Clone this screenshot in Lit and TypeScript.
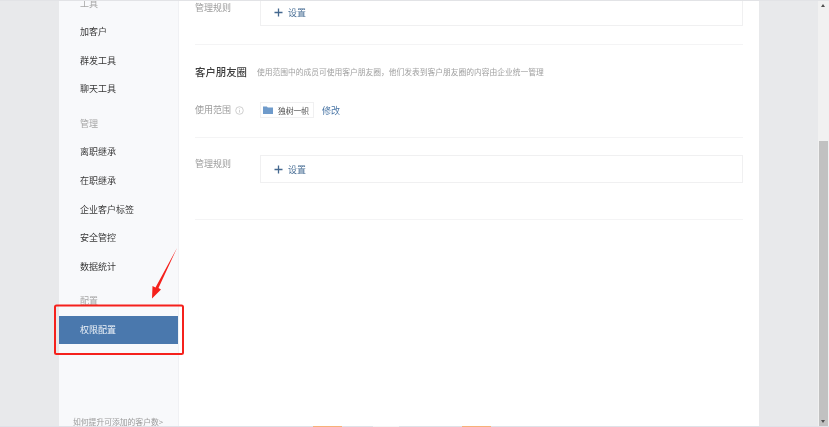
import { LitElement, html, css, svg } from "lit";
import { customElement } from "lit/decorators.js";

const nav: [string, string][] = [
  ["g", "工具"], ["i", "加客户"], ["i", "群发工具"], ["i", "聊天工具"],
  ["g", "管理"], ["i", "离职继承"], ["i", "在职继承"], ["i", "企业客户标签"], ["i", "安全管控"], ["i", "数据统计"],
  ["g", "配置"], ["a", "权限配置"],
];

const plus = svg`<path d="M4.5 0.5V8.5M0.5 4.5H8.5" stroke="#44688f" stroke-width="1.3" fill="none"/>`;

@customElement("app-root")
export class AppRoot extends LitElement {
  static styles = css`
    :host { display: block; width: 829px; height: 427px; overflow: hidden; position: relative; background: #e8e9eb;
      font-family: "Noto Sans CJK SC", "Liberation Sans", sans-serif; }
    .page { display: flex; height: 427px; padding-left: 59px; box-sizing: border-box; filter: blur(0.4px); }
    .side { width: 120px; flex: none; background: #f8f9fb; border-right: 1px solid #f0f1f4;
      box-sizing: border-box; display: flex; flex-direction: column; height: 427px; overflow: hidden; }
    .list { margin-top: -10.5px; }
    .row { height: 28.6px; line-height: 28.6px; padding-left: 21px; font-size: 9px; color: #383838; white-space: nowrap; }
    .row.g { color: #a5a5a5; margin-top: 5.9px; }
    .row.g:first-child { margin-top: 0; }
    .row.a { background: #4a78ad; color: #eef3f8; margin-right: -1px; }
    .foot { margin-top: auto; padding-left: 14px; font-size: 7.8px; line-height: 12px; color: #9a9a9a; margin-bottom: -1px; white-space: nowrap; }
    .main { width: 580px; flex: none; background: #fff; padding: 0 16px; box-sizing: border-box; }
    .sec { border-bottom: 1.5px solid #f4f4f5; box-sizing: border-box; }
    .s1 { height: 45px; display: flex; }
    .s2 { height: 93px; padding-top: 18px; }
    .s3 { height: 82px; padding-top: 17px; display: flex; }
    .label { width: 65px; flex: none; font-size: 9px; color: #9c9c9c; line-height: 14px; white-space: nowrap; }
    .s3 .label { margin-top: 2px; }
    .s1 .label { margin-top: 1px; }
    .box { flex: 1; height: 28px; border: 1px solid #f0f0f1; box-sizing: border-box; display: flex; align-items: center;
      padding-left: 13px; gap: 5px; font-size: 9px; color: #4a6f96; }
    .s1 .box { margin-top: -2px; }
    .title { display: flex; align-items: center; height: 16px; }
    .title b { font-weight: 500; font-size: 10.4px; color: #3d3d3d; white-space: nowrap; }
    .title span { margin-left: 10px; font-size: 7.75px; color: #a0a0a0; white-space: nowrap; }
    .use { display: flex; align-items: center; margin-top: 23px; height: 16px; }
    .use .label { display: flex; align-items: center; gap: 4px; }
    .tag { width: 54px; height: 16px; box-sizing: border-box; border: 1px solid #f0f0f1; display: flex; align-items: center;
      padding-left: 2px; gap: 5px; font-size: 7.75px; color: #4a4a4a; white-space: nowrap; }
    .edit { margin-left: 8px; font-size: 9px; color: #4a76a6; }
    .scroll { width: 11px; height: 427px; background: #f1f1f1; margin-left: 59px; flex: none; position: relative; }
    .thumb { position: absolute; left: 1px; right: 1px; top: 141px; bottom: 0; background: #c1c1c1; }
    .arr { position: absolute; left: 3px; width: 0; height: 0; border-left: 2.5px solid transparent; border-right: 2.5px solid transparent; }
    .up { top: 4px; border-bottom: 3px solid #505050; }
    .down { bottom: 4px; border-top: 3px solid #505050; }
    .topline { position: absolute; left: 0; right: 0; top: 0; height: 1px; background: #e2e3e6; }
    .botline { position: absolute; left: 0; right: 0; bottom: 0; height: 1px; background: #dfe2e8; }
    .seg { position: absolute; top: 0; height: 100%; }
    .o1 { left: 313px; width: 29px; background: #f7b179; }
    .w1 { left: 373px; width: 26px; background: #f2f3f4; }
    .o2 { left: 462px; width: 29px; background: #f7b179; }
    .mark { position: absolute; left: 0; top: 0; pointer-events: none; }
  `;

  render() {
    return html`
      <div class="page">
        <aside class="side">
          <div class="list">
            ${nav.map(([k, t]) => html`<div class="row ${k}">${t}</div>`)}
          </div>
          <div class="foot">如何提升可添加的客户数&gt;</div>
        </aside>
        <main class="main">
          <section class="sec s1">
            <div class="label">管理规则</div>
            <div class="box"><svg width="9" height="9" viewBox="0 0 9 9">${plus}</svg>设置</div>
          </section>
          <section class="sec s2">
            <div class="title"><b>客户朋友圈</b><span>使用范围中的成员可使用客户朋友圈，他们发表到客户朋友圈的内容由企业统一管理</span></div>
            <div class="use">
              <div class="label">使用范围
                <svg width="9" height="9" viewBox="0 0 9 9"><circle cx="4.5" cy="4.5" r="3.8" fill="none" stroke="#c4c4c4" stroke-width="0.8"/><path d="M4.5 4V6.6M4.5 2.4V3.2" stroke="#c4c4c4" stroke-width="0.8"/></svg>
              </div>
              <div class="tag">
                <svg width="10" height="8" viewBox="0 0 10 8"><path d="M0 0.5H3.8L4.8 1.6H10V8H0Z" fill="#6f9bcb"/></svg>
                独树一帜
              </div>
              <span class="edit">修改</span>
            </div>
          </section>
          <section class="sec s3">
            <div class="label">管理规则</div>
            <div class="box"><svg width="9" height="9" viewBox="0 0 9 9">${plus}</svg>设置</div>
          </section>
        </main>
        <div class="scroll">
          <div class="arr up"></div>
          <div class="thumb"></div>
          <div class="arr down"></div>
        </div>
      </div>
      <div class="topline"></div>
      <div class="botline"><i class="seg o1"></i><i class="seg w1"></i><i class="seg o2"></i></div>
      <svg class="mark" width="829" height="427" viewBox="0 0 829 427">
        <rect x="55" y="305.5" width="128" height="48.5" rx="1.5" fill="none" stroke="#f5211c" stroke-width="2"/>
        <path d="M177 248 L158.5 288 L161 289.5 L152 298.5 L152.5 286 L155.5 287.5 Z" fill="#f5211c"/>
      </svg>
    `;
  }
}
